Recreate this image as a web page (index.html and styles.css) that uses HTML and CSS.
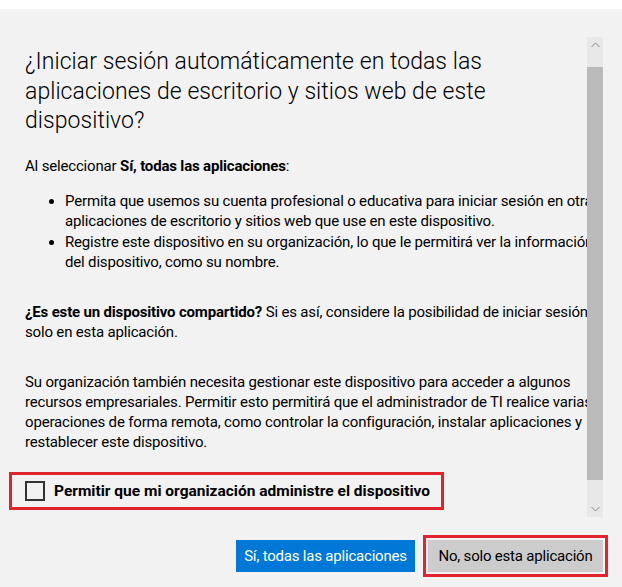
FILE: index.html
```html
<!DOCTYPE html>
<html lang="es">
<head>
<meta charset="utf-8">
<title>Iniciar sesión</title>
<link rel="stylesheet" href="styles.css">
</head>
<body>
<div class="panel">
  <div class="scroll-area">
    <div class="viewport">
      <div class="content">
        <h1 class="title">¿Iniciar sesión automáticamente en todas las aplicaciones de escritorio y sitios web de este dispositivo?</h1>
        <p class="intro">Al seleccionar <b>Sí, todas las aplicaciones</b>:</p>
        <ul class="bullets">
          <li>Permita que usemos su cuenta profesional o educativa para iniciar sesión en otras aplicaciones de escritorio y sitios web que use en este dispositivo.</li>
          <li>Registre este dispositivo en su organización, lo que le permitirá ver la información del dispositivo, como su nombre.</li>
        </ul>
        <p class="shared"><b>¿Es este un dispositivo compartido?</b> Si es así, considere la posibilidad de iniciar sesión solo en esta aplicación.</p>
        <p class="manage">Su organización también necesita gestionar este dispositivo para acceder a algunos recursos empresariales. Permitir esto permitirá que el administrador de TI realice varias operaciones de forma remota, como controlar la configuración, instalar aplicaciones y restablecer este dispositivo.</p>
        <label class="check-row">
          <span class="checkbox"></span>
          <span class="check-label">Permitir que mi organización administre el dispositivo</span>
        </label>
      </div>
    </div>
    <div class="scrollbar">
      <div class="sb-btn">
        <svg width="9" height="6" viewBox="0 0 9 6"><path d="M0.5 5 L4.5 1 L8.5 5" fill="none" stroke="#8a8a8a" stroke-width="1"/></svg>
      </div>
      <div class="sb-thumb"></div>
      <div class="sb-btn sb-btn-down">
        <svg width="9" height="6" viewBox="0 0 9 6"><path d="M0.5 1 L4.5 5 L8.5 1" fill="none" stroke="#8a8a8a" stroke-width="1"/></svg>
      </div>
    </div>
  </div>
  <div class="actions">
    <button class="btn btn-primary">Sí, todas las aplicaciones</button>
    <button class="btn btn-secondary">No, solo esta aplicación</button>
  </div>
</div>
</body>
</html>
```

FILE: styles.css
```css
html, body {
  margin: 0;
  padding: 0;
  background: #ffffff;
}

body {
  font-family: Roboto, "Noto Sans", sans-serif;
  color: #000;
  width: 622px;
  height: 587px;
  overflow: hidden;
}

.panel {
  margin-top: 9px;
  height: 578px;
  background: #f2f2f2;
  padding-top: 28px;
  box-sizing: border-box;
}

.scroll-area {
  display: flex;
  height: 480px;
  padding-right: 19px;
}

.viewport {
  flex: 1;
  overflow: hidden;
  min-width: 0;
}

.content {
  width: 585px;
  padding-left: 25px;
  font-size: 15px;
  line-height: 20px;
  letter-spacing: -0.17px;
}

.title {
  margin: 10px 0 0;
  width: 470px;
  font-size: 23px;
  font-weight: 300;
  line-height: 29.5px;
  letter-spacing: 0.05px;
}

.intro {
  margin: 20px 0 0;
}

.bullets {
  margin: 15px 0 0;
  padding-left: 40px;
}

.bullets li + li {
  margin-top: 1px;
}

.shared {
  margin: 30px 0 0;
}

.manage {
  margin: 30px 0 0;
}

.check-row {
  display: flex;
  align-items: center;
  gap: 9px;
  width: 435px;
  height: 38px;
  box-sizing: border-box;
  margin: 20px 0 0 -16px;
  padding-left: 13px;
  border: 3px solid #e1232b;
}

.checkbox {
  width: 20px;
  height: 20px;
  box-sizing: border-box;
  border: 2px solid #333;
  flex-shrink: 0;
}

.check-label {
  font-weight: 700;
  font-size: 15.5px;
  letter-spacing: 0;
  white-space: nowrap;
}

.scrollbar {
  width: 16px;
  background: #e8e8e8;
  display: flex;
  flex-direction: column;
}

.sb-btn {
  height: 16px;
  display: flex;
  align-items: center;
  justify-content: center;
}

.sb-thumb {
  margin-top: 14px;
  height: 413px;
  background: #bababa;
}

.sb-btn-down {
  margin-top: auto;
}

.actions {
  display: flex;
  justify-content: flex-end;
  gap: 13px;
  padding-right: 19px;
  margin-top: 23px;
}

.btn {
  height: 32px;
  border: none;
  font-family: Roboto, "Noto Sans", sans-serif;
  font-size: 15px;
  letter-spacing: -0.2px;
  padding: 0;
}

.btn-primary {
  width: 179px;
  background: #0078d7;
  color: #fff;
}

.btn-secondary {
  width: 175px;
  background: #cccccc;
  color: #000;
  outline: 3px solid #e1232b;
  outline-offset: 2px;
}
```
